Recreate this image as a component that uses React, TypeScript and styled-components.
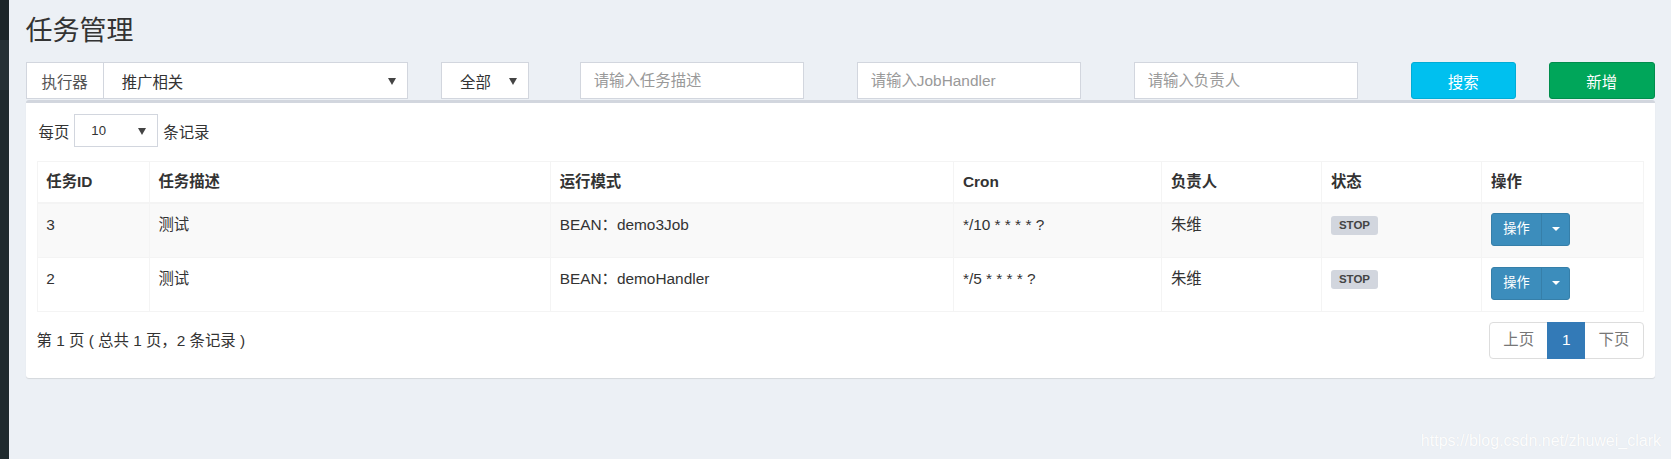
import React from "react";
import styled, { createGlobalStyle, css } from "styled-components";

const GlobalStyle = createGlobalStyle`
  html, body { margin: 0; padding: 0; }
  body {
    background: #ecf0f5;
    font-family: "Liberation Sans", "Noto Sans CJK SC", Arial, sans-serif;
    font-size: 15.4px;
    color: #333;
  }
  * { box-sizing: border-box; }
`;

const Layout = styled.div`
  position: relative;
  display: flex;
  min-height: 459px;
  overflow: hidden;
`;

const Sidebar = styled.aside`
  width: 9px;
  flex: 0 0 9px;
  display: flex;
  flex-direction: column;
`;

const SideBand = styled.div<{ $tone: "top" | "mid" | "rest" }>`
  height: ${(p) => (p.$tone === "top" ? "40px" : p.$tone === "mid" ? "50px" : "auto")};
  flex: ${(p) => (p.$tone === "rest" ? "1" : "0 0 auto")};
  background: ${(p) => (p.$tone === "top" ? "#1c2529" : p.$tone === "mid" ? "#253035" : "#1f2a2e")};
`;

const Main = styled.main`
  flex: 1;
  min-width: 0;
`;

const PageHeader = styled.section`
  padding: 16.5px 16.5px 0;
`;

const Title = styled.h1`
  margin: 0;
  font-size: 27px;
  line-height: 29px;
  font-weight: 400;
  color: #333;
`;

const Content = styled.section`
  padding: 16.5px 16.5px 0;
`;

const FilterRow = styled.div`
  display: grid;
  grid-template-columns: repeat(12, 1fr);
  margin: 0 -16.5px;
`;

const Col = styled.div<{ $span: number }>`
  grid-column: span ${(p) => p.$span};
  padding: 0 16.5px;
  display: flex;
`;

const InputGroup = styled.div`
  display: flex;
  flex: 1;
  height: 37px;
`;

const Addon = styled.span`
  display: flex;
  align-items: center;
  padding: 0 15px;
  border: 1px solid #d2d6de;
  border-right: none;
  background: #fff;
  color: #555;
  white-space: nowrap;
`;

const SelectBox = styled.div<{ $width?: number; $small?: boolean }>`
  position: relative;
  display: flex;
  align-items: center;
  height: ${(p) => (p.$small ? "33px" : "37px")};
  ${(p) => (p.$width ? css`width: ${p.$width}px;` : css`flex: 1;`)}
  padding-left: ${(p) => (p.$small ? "16px" : "18px")};
  border: 1px solid #d2d6de;
  background: #fff;
  color: #333;
  font-size: ${(p) => (p.$small ? "13.2px" : "15.4px")};
`;

const Caret = styled.span`
  position: absolute;
  right: 11px;
  top: 50%;
  margin-top: -3px;
  width: 0;
  height: 0;
  border-left: 4px solid transparent;
  border-right: 4px solid transparent;
  border-top: 7px solid #444;
`;

const TextInput = styled.input`
  width: 224px;
  height: 37px;
  padding: 0 13.2px;
  border: 1px solid #d2d6de;
  background: #fff;
  font: inherit;
  color: #555;
  outline: none;
  &::placeholder { color: #999; }
`;

const ActionButton = styled.button<{ $variant: "info" | "success" }>`
  flex: 1;
  height: 37px;
  border-radius: 3px;
  font: inherit;
  color: #fff;
  cursor: pointer;
  background: ${(p) => (p.$variant === "info" ? "#00c0ef" : "#00a65a")};
  border: 1px solid ${(p) => (p.$variant === "info" ? "#00acd6" : "#008d4c")};
`;

const Box = styled.div`
  margin-top: 1px;
  background: #fff;
  border-top: 3px solid #d2d6de;
  border-radius: 3px;
  box-shadow: 0 1px 1px rgba(0, 0, 0, 0.1);
`;

const BoxBody = styled.div`
  padding: 11px 11px 19px;
`;

const LengthRow = styled.div`
  display: flex;
  align-items: center;
  gap: 5px;
  height: 33px;
  margin-left: 2px;
`;

const Table = styled.table`
  width: 100%;
  margin-top: 14px;
  border-collapse: collapse;
  table-layout: fixed;
  border: 1px solid #f4f4f4;
`;

const Th = styled.th`
  text-align: left;
  font-weight: 700;
  padding: 8.8px;
  line-height: 22px;
  border: 1px solid #f4f4f4;
  border-bottom-width: 2px;
  color: #333;
`;

const Row = styled.tr<{ $striped?: boolean }>`
  background: ${(p) => (p.$striped ? "#f9f9f9" : "#fff")};
`;

const Td = styled.td`
  padding: 10px 8.8px 11px;
  line-height: 22px;
  vertical-align: top;
  border: 1px solid #f4f4f4;
  color: #333;
`;

const StatusLabel = styled.span`
  display: inline-block;
  width: 47px;
  height: 19px;
  line-height: 19px;
  text-align: center;
  background: #d2d6de;
  color: #444;
  font-size: 11.5px;
  font-weight: 700;
  border-radius: 3px;
  vertical-align: middle;
`;

const SplitButton = styled.div`
  display: flex;
  width: fit-content;
  height: 33px;
  border-radius: 3px;
  overflow: hidden;
  background: #3c8dbc;
  border: 1px solid #367fa9;
  margin-top: -1px;
`;

const SplitMain = styled.span`
  width: 50px;
  display: flex;
  align-items: center;
  justify-content: center;
  color: #fff;
  font-size: 13.2px;
  border-right: 1px solid #367fa9;
`;

const SplitCaret = styled.span`
  width: 27px;
  display: flex;
  align-items: center;
  justify-content: center;
  &::after {
    content: "";
    border-left: 4.5px solid transparent;
    border-right: 4.5px solid transparent;
    border-top: 4.5px solid #fff;
  }
`;

const Footer = styled.div`
  display: flex;
  justify-content: space-between;
  align-items: flex-start;
  margin-top: 10px;
`;

const Info = styled.div`
  padding-top: 8.8px;
  line-height: 22px;
  color: #333;
`;

const Pager = styled.ul`
  display: flex;
  list-style: none;
  margin: 0;
  padding: 0;
`;

const PageItem = styled.li<{ $active?: boolean; $pos?: "first" | "last" }>`
  padding: 6.6px 13.2px;
  line-height: 22px;
  border: 1px solid ${(p) => (p.$active ? "#337ab7" : "#ddd")};
  margin-left: -1px;
  background: ${(p) => (p.$active ? "#337ab7" : "#fff")};
  color: ${(p) => (p.$active ? "#fff" : "#777")};
  border-radius: ${(p) => (p.$pos === "first" ? "4px 0 0 4px" : p.$pos === "last" ? "0 4px 4px 0" : "0")};
  position: relative;
  z-index: ${(p) => (p.$active ? 1 : 0)};
  min-width: 38px;
  text-align: center;
`;

const Watermark = styled.div`
  position: absolute;
  right: 10px;
  bottom: 9px;
  font-family: "Liberation Sans", Arial, sans-serif;
  font-size: 16px;
  color: rgba(255, 255, 255, 0.95);
  text-shadow: 0 0 1px rgba(0, 0, 0, 0.08);
`;

const columns = [
  { title: "任务ID", width: 112 },
  { title: "任务描述", width: 400.7 },
  { title: "运行模式", width: 402.8 },
  { title: "Cron", width: 207.8 },
  { title: "负责人", width: 159.8 },
  { title: "状态", width: 159.9 },
  { title: "操作", width: 161 },
];

const jobs = [
  { id: 3, desc: "测试", mode: "BEAN：demo3Job", cron: "*/10 * * * * ?", owner: "朱维" },
  { id: 2, desc: "测试", mode: "BEAN：demoHandler", cron: "*/5 * * * * ?", owner: "朱维" },
];

export default function App() {
  return (
    <>
      <GlobalStyle />
      <Layout>
        <Sidebar>
          <SideBand $tone="top" />
          <SideBand $tone="mid" />
          <SideBand $tone="rest" />
        </Sidebar>
        <Main>
          <PageHeader>
            <Title>任务管理</Title>
          </PageHeader>
          <Content>
            <FilterRow>
              <Col $span={3}>
                <InputGroup>
                  <Addon>执行器</Addon>
                  <SelectBox>
                    推广相关
                    <Caret />
                  </SelectBox>
                </InputGroup>
              </Col>
              <Col $span={1}>
                <SelectBox $width={88}>
                  全部
                  <Caret />
                </SelectBox>
              </Col>
              <Col $span={2}>
                <TextInput placeholder="请输入任务描述" />
              </Col>
              <Col $span={2}>
                <TextInput placeholder="请输入JobHandler" />
              </Col>
              <Col $span={2}>
                <TextInput placeholder="请输入负责人" />
              </Col>
              <Col $span={1}>
                <ActionButton $variant="info">搜索</ActionButton>
              </Col>
              <Col $span={1}>
                <ActionButton $variant="success">新增</ActionButton>
              </Col>
            </FilterRow>
            <Box>
              <BoxBody>
                <LengthRow>
                  每页
                  <SelectBox $small $width={84}>
                    10
                    <Caret />
                  </SelectBox>
                  条记录
                </LengthRow>
                <Table>
                  <colgroup>
                    {columns.map((c) => (
                      <col key={c.title} style={{ width: c.width }} />
                    ))}
                  </colgroup>
                  <thead>
                    <tr>
                      {columns.map((c) => (
                        <Th key={c.title}>{c.title}</Th>
                      ))}
                    </tr>
                  </thead>
                  <tbody>
                    {jobs.map((j, i) => (
                      <Row key={j.id} $striped={i % 2 === 0}>
                        <Td>{j.id}</Td>
                        <Td>{j.desc}</Td>
                        <Td>{j.mode}</Td>
                        <Td>{j.cron}</Td>
                        <Td>{j.owner}</Td>
                        <Td>
                          <StatusLabel>STOP</StatusLabel>
                        </Td>
                        <Td>
                          <SplitButton>
                            <SplitMain>操作</SplitMain>
                            <SplitCaret />
                          </SplitButton>
                        </Td>
                      </Row>
                    ))}
                  </tbody>
                </Table>
                <Footer>
                  <Info>第 1 页 ( 总共 1 页，2 条记录 )</Info>
                  <Pager>
                    <PageItem $pos="first">上页</PageItem>
                    <PageItem $active>1</PageItem>
                    <PageItem $pos="last">下页</PageItem>
                  </Pager>
                </Footer>
              </BoxBody>
            </Box>
          </Content>
        </Main>
        <Watermark>https://blog.csdn.net/zhuwei_clark</Watermark>
      </Layout>
    </>
  );
}
